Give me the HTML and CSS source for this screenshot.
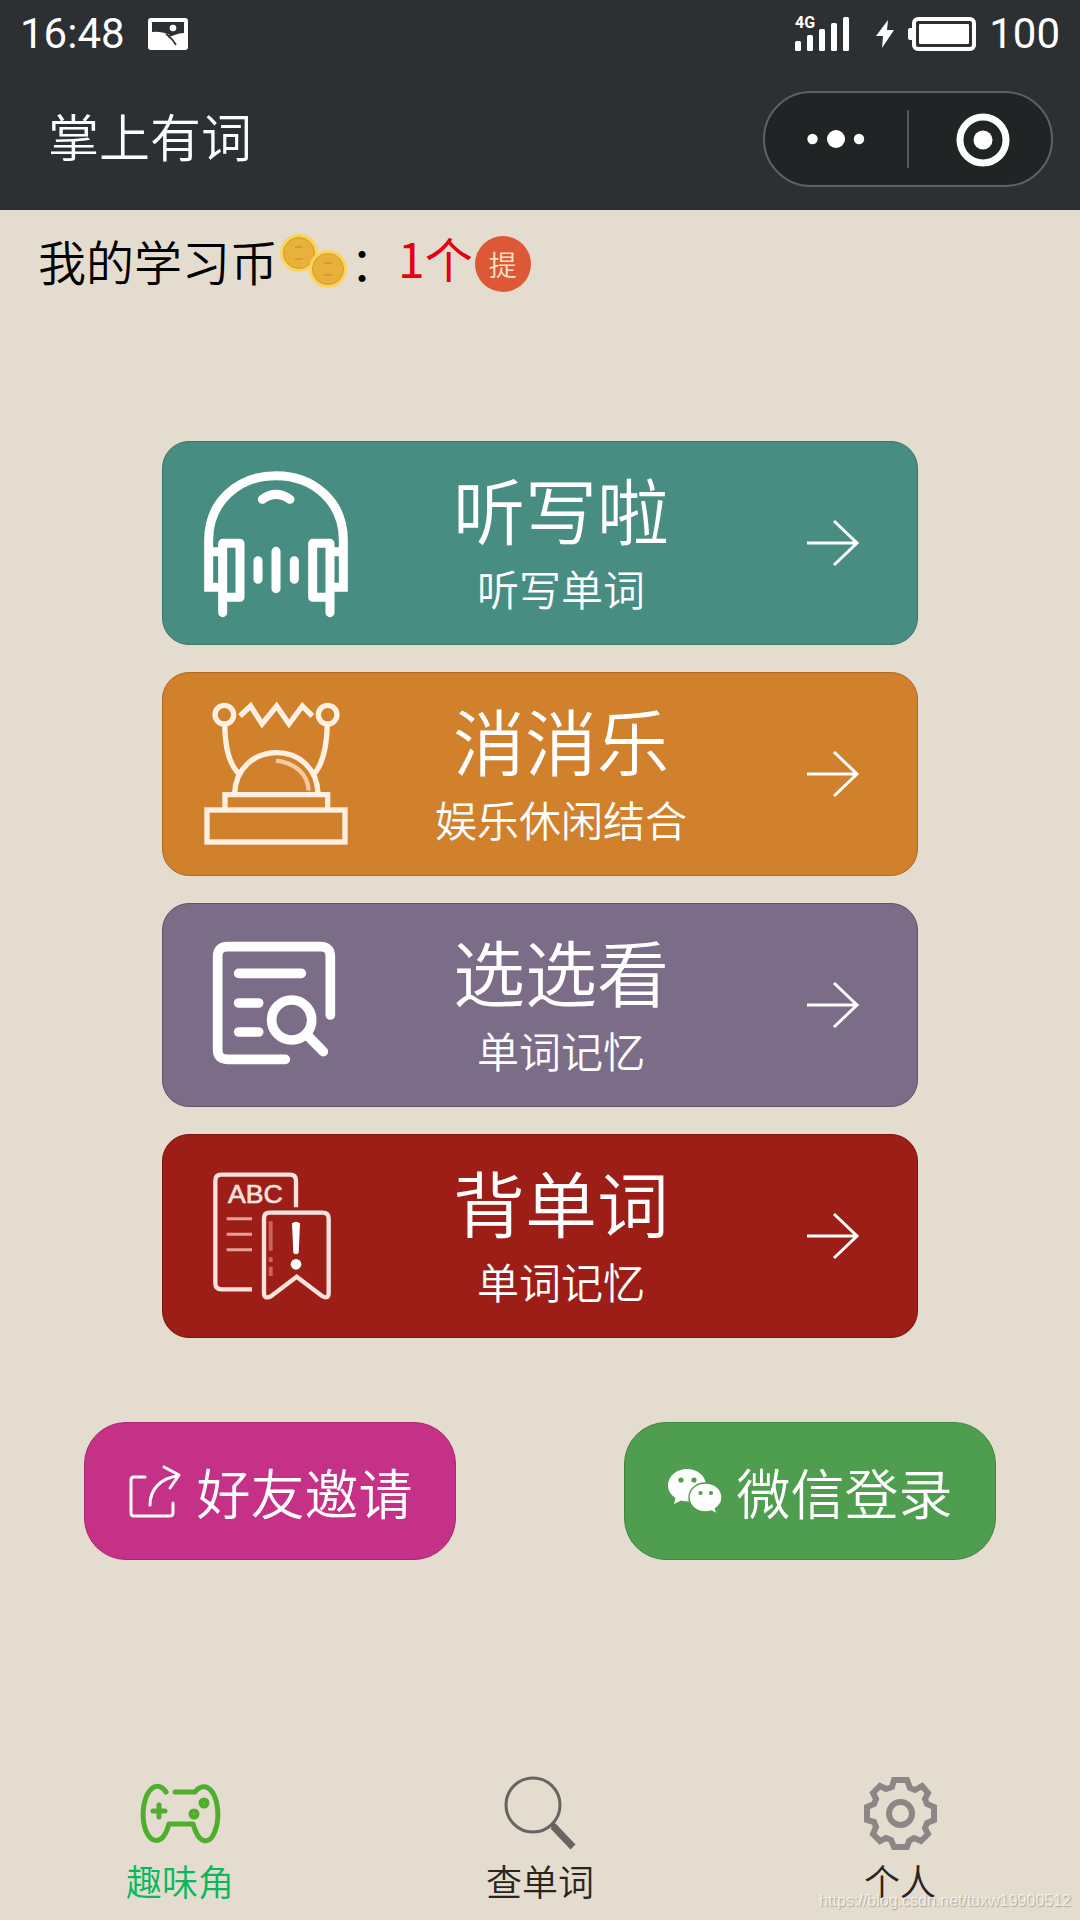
FILE: index.html
```html
<!DOCTYPE html>
<html lang="zh-CN">
<head>
    <meta charset="UTF-8">
    <meta name="viewport" content="width=device-width, initial-scale=1.0">
    <title>掌上有词</title>
    <link rel="stylesheet" href="styles.css">
</head>
<body>
    <header class="header">
        <div class="status-bar">
            <div class="status-group">
                <span>16:48</span>
                <svg class="icon-photo" viewBox="0 0 40 32">
                    <rect width="40" height="32" rx="3" fill="#fff"/>
                    <path d="M4 4H36V15Q31 15 24 18Q14 13 4 14Z" fill="#2c3032"/>
                    <path d="M18 16Q24 20 28 27M20 19L25 16" stroke="#2c3032" stroke-width="1.6" fill="none"/>
                    <circle cx="25" cy="10" r="3.3" fill="#fff"/>
                </svg>
            </div>
            <div class="status-group">
                <svg class="icon-signal" viewBox="0 0 56 36" fill="#fff">
                    <text class="net-type" x="0" y="12">4G</text>
                    <rect x="0" y="25" width="6" height="10" rx="1.5"/>
                    <rect x="12" y="19" width="6" height="16" rx="1.5"/>
                    <rect x="24" y="13" width="6" height="22" rx="1.5"/>
                    <rect x="36" y="7" width="6" height="28" rx="1.5"/>
                    <rect x="48" y="1" width="6" height="34" rx="1.5"/>
                </svg>
                <svg class="icon-bolt" viewBox="0 0 20 30" fill="#fff">
                    <path d="M13 1L1 17H8L7 29L19 11H12Z"/>
                </svg>
                <svg class="icon-battery" viewBox="0 0 70 34">
                    <rect x="1" y="11" width="6" height="12" rx="2" fill="#fff"/>
                    <rect x="7" y="2" width="60" height="30" rx="4" fill="none" stroke="#fff" stroke-width="4"/>
                    <rect x="12" y="7" width="50" height="20" rx="1" fill="#fff"/>
                </svg>
                <span>100</span>
            </div>
        </div>
        <div class="nav-bar">
            <h1 class="nav-title">掌上有词</h1>
            <div class="capsule">
                <button class="capsule-btn" type="button" aria-label="更多">
                    <svg class="icon-more" viewBox="0 0 58 18" fill="#fff">
                        <circle cx="5.500" cy="9" r="5.200"/>
                        <circle cx="29" cy="9" r="9"/>
                        <circle cx="52" cy="9" r="5.200"/>
                    </svg>
                </button>
                <button class="capsule-btn" type="button" aria-label="关闭">
                    <svg class="icon-close" viewBox="0 0 60 54">
                        <circle cx="33" cy="28" r="23" fill="none" stroke="#fff" stroke-width="7"/>
                        <circle cx="33" cy="28" r="9.500" fill="#fff"/>
                    </svg>
                </button>
            </div>
        </div>
    </header>

    <main class="content">
        <div class="coin-row">
            <span class="coin-label">我的学习币</span>
            <svg class="icon-coins" viewBox="0 0 72 56">
                <circle cx="21" cy="20" r="19" fill="#fbd45c"/>
                <circle cx="21" cy="20" r="15.500" fill="#e7b13c" stroke="#d39b2d"/>
                <path d="M17 14H25M17 26H25" stroke="#cf9628" stroke-width="1.500"/>
                <circle cx="50" cy="36" r="19" fill="#fbd45c"/>
                <circle cx="50" cy="36" r="15.500" fill="#e7b13c" stroke="#d39b2d"/>
                <path d="M46 30H54M46 42H54" stroke="#cf9628" stroke-width="1.500"/>
            </svg>
            <span class="coin-label">：</span>
            <span class="coin-count">1个</span>
            <button class="coin-badge" type="button">提</button>
        </div>

        <div class="cards">
            <button class="card card-green" type="button">
                <svg class="card-icon" viewBox="162 123 432 432" fill="none" stroke="#fff" stroke-width="27">
                    <path d="M218 472H176V330C176 220 260 137 378 137S580 220 580 330V472H540"/>
                    <path d="M188 365H212M544 365H568"/>
                    <path d="M218 548V340H270V502H226M540 548V340H488V502H532" stroke-linejoin="round" stroke-linecap="round"/>
                    <path d="M337 208Q378 178 420 208M324 392V448M378 364V476M433 392V448" stroke-linecap="round"/>
                </svg>
                <span class="card-text">
                    <span class="card-title">听写啦</span>
                    <span class="card-desc">听写单词</span>
                </span>
                <svg class="card-arrow" viewBox="0 0 118 60">
                    <path d="M33 30H83M60 8L83 30L60 52"/>
                </svg>
            </button>
            <button class="card card-orange" type="button">
                <svg class="card-icon" viewBox="162 126 432 432" fill="none" stroke="#fff0e2" stroke-width="16">
                    <circle cx="223" cy="164" r="28"/>
                    <circle cx="533" cy="164" r="28"/>
                    <path d="M270 168L302 138L336 192L380 138L417 192L457 138L487 168"/>
                    <path d="M224 194C226 270 238 310 266 342M532 194C530 270 516 315 492 342"/>
                    <path d="M254 398C258 326 312 278 380 278S500 326 504 398"/>
                    <path d="M378 302C432 308 474 340 476 392" stroke="#f6c9a0" stroke-width="13"/>
                    <path d="M225 446V404H533V446"/>
                    <rect x="171" y="450" width="414" height="96"/>
                </svg>
                <span class="card-text">
                    <span class="card-title">消消乐</span>
                    <span class="card-desc">娱乐休闲结合</span>
                </span>
                <svg class="card-arrow" viewBox="0 0 118 60">
                    <path d="M33 30H83M60 8L83 30L60 52"/>
                </svg>
            </button>
            <button class="card card-purple" type="button">
                <svg class="card-icon" viewBox="162 129 432 432" fill="none" stroke="#fff" stroke-width="29" stroke-linecap="round">
                    <path d="M406 508H232Q203 508 203 479V199Q203 170 232 170H512Q541 170 541 199V375"/>
                    <path d="M266 250H454M266 339H326M266 426H326"/>
                    <circle cx="425" cy="390" r="60"/>
                    <path d="M474 438L520 485"/>
                </svg>
                <span class="card-text">
                    <span class="card-title">选选看</span>
                    <span class="card-desc">单词记忆</span>
                </span>
                <svg class="card-arrow" viewBox="0 0 118 60">
                    <path d="M33 30H83M60 8L83 30L60 52"/>
                </svg>
            </button>
            <button class="card card-red" type="button">
                <svg class="card-icon" viewBox="162 132 432 432" fill="none" stroke="#fbe3dd" stroke-width="13">
                    <path d="M306 508H214Q196 508 196 490V182Q196 164 214 164H420Q438 164 438 182V262"/>
                    <path d="M230 296H306M230 343H306M230 389H306" stroke="#e5a29b" stroke-width="9"/>
                    <path d="M358 278H518Q536 278 536 296V518Q536 540 516 528L440 470L364 528Q342 540 342 518V296Q342 278 358 278Z"/>
                    <path d="M362 304V392M362 412V426M362 440V468" stroke="#c9655d" stroke-width="12"/>
                    <path d="M426 310Q438 300 450 310L446 398Q438 408 430 398Z" fill="#fff" stroke="none"/>
                    <circle cx="438" cy="433" r="16" fill="#fff" stroke="none"/>
                    <text class="icon-abc" x="316" y="248">ABC</text>
                </svg>
                <span class="card-text">
                    <span class="card-title">背单词</span>
                    <span class="card-desc">单词记忆</span>
                </span>
                <svg class="card-arrow" viewBox="0 0 118 60">
                    <path d="M33 30H83M60 8L83 30L60 52"/>
                </svg>
            </button>
        </div>

        <div class="actions">
            <button class="action-btn action-invite" type="button">
                <svg class="action-icon" viewBox="0 0 54 54" fill="none" stroke="#fff" stroke-width="3" stroke-linecap="round" stroke-linejoin="round">
                    <path d="M17 13H6Q3 13 3 16V49Q3 52 6 52H41Q45 52 45 49V39"/>
                    <path d="M22 41C22 26 32 14 50 12M36 3L51 11L42 24"/>
                </svg>
                <span>好友邀请</span>
            </button>
            <button class="action-btn action-login" type="button">
                <svg class="action-icon" viewBox="0 0 54 54">
                    <path d="M19 5C8.500 5 0 12 0 21.500C0 26.500 3 31 7.500 34L6 40L13 36.500Q16 37.500 21 37.500C31 37 38 30 38 21.500C38 12 29.500 5 19 5Z" fill="#fff"/>
                    <circle cx="13" cy="16" r="2.600" fill="#4f9d4e"/>
                    <circle cx="26" cy="16" r="2.600" fill="#4f9d4e"/>
                    <path d="M37.500 19C28 19 21 25.500 21 33.500S28 48 37.500 48Q41 48 43.500 47L49 50L47.500 44.500C51.500 42 54 38 54 33.500C54 25.500 47 19 37.500 19Z" fill="#fff" stroke="#4f9d4e" stroke-width="1.400"/>
                    <circle cx="32.500" cy="29" r="2.100" fill="#4f9d4e"/>
                    <circle cx="43" cy="29" r="2.100" fill="#4f9d4e"/>
                </svg>
                <span>微信登录</span>
            </button>
        </div>
    </main>

    <nav class="tab-bar">
        <a class="tab tab-active" href="#">
            <svg class="tab-icon" viewBox="0 0 81 81" fill="none" stroke="#4fae2d" stroke-width="5" stroke-linecap="round" stroke-linejoin="round">
                <path d="M26 19C20 10 12 12 7 22C2 33 2 48 6 58C11 70 20 70 25 61Q27 58 29 51H53Q55 58 58 63C63 70 71 70 75 58C79 48 79 33 74 22C69 12 61 11 55 19H35"/>
                <path d="M13 38H25M19 32V44"/>
                <circle cx="64" cy="30" r="3"/>
                <circle cx="54" cy="41" r="3"/>
            </svg>
            <span>趣味角</span>
        </a>
        <a class="tab" href="#">
            <svg class="tab-icon" viewBox="0 0 81 81" fill="none" stroke="#6a6361">
                <circle cx="33" cy="32" r="27" stroke-width="3"/>
                <path d="M52 51L57 56" stroke-width="5"/>
                <path d="M53 53L73 74" stroke-width="7"/>
            </svg>
            <span>查单词</span>
        </a>
        <a class="tab" href="#">
            <svg class="tab-icon" viewBox="0 0 81 81" fill="none" stroke="#8c8786" stroke-width="6">
                <path d="M34 7H47L50 15L55 17L62 13L68 20L65 26L67 31L74 34V47L67 50L65 55L68 61L61 68L54 65L49 68L47 74H34L31 67L26 65L20 68L13 61L16 54L14 49L7 47V34L14 31L16 26L13 20L20 13L26 16L32 14Z"/>
                <circle cx="40.500" cy="40.500" r="11.500"/>
            </svg>
            <span>个人</span>
        </a>
        <span class="watermark">https://blog.csdn.net/tuxw19900512</span>
    </nav>
</body>
</html>
```

FILE: styles.css
```css
* {
    box-sizing: border-box;
}
body {
    display: flex;
    flex-direction: column;
    min-height: 100vh;
    margin: 0;
    background: #e4ddcf;
    color: #000;
    font-family: "Noto Sans CJK SC", sans-serif;
    font-weight: 350;
}
button {
    margin: 0;
    padding: 0;
    border: none;
    background: none;
    color: inherit;
    font: inherit;
    cursor: pointer;
}
svg {
    display: block;
    flex: none;
    overflow: visible;
}

/* 顶部 */
.header {
    background: #2c3032;
    color: #fff;
    padding-bottom: 23px;
}
.status-bar {
    display: flex;
    justify-content: space-between;
    align-items: center;
    height: 67px;
    padding: 0 20px;
    font: 400 42px/67px Roboto, sans-serif;
}
.status-group {
    display: flex;
    align-items: center;
}
.icon-photo {
    width: 40px;
    height: 32px;
    margin-left: 23px;
}
.icon-signal {
    width: 56px;
    height: 36px;
}
.net-type {
    font: 700 16px Roboto, sans-serif;
}
.icon-bolt {
    width: 20px;
    height: 30px;
    margin-left: 24px;
}
.icon-battery {
    width: 70px;
    height: 34px;
    margin: 0 12px;
}
.nav-bar {
    display: flex;
    justify-content: space-between;
    align-items: center;
    height: 120px;
    padding: 24px 27px 0 48px;
}
.nav-title {
    margin: 0;
    padding-bottom: 8px;
    font-size: 51px;
    font-weight: 350;
    line-height: 88px;
}
.capsule {
    display: flex;
    align-items: center;
    width: 290px;
    height: 96px;
    border: 2px solid #5d6162;
    border-radius: 48px;
    background: #202425;
}
.capsule-btn {
    display: flex;
    flex: 1;
    justify-content: center;
    align-items: center;
    height: 58px;
}
.capsule-btn + .capsule-btn {
    border-left: 2px solid #56595a;
}
.icon-more {
    width: 58px;
    height: 18px;
}
.icon-close {
    width: 60px;
    height: 54px;
}

/* 学习币 */
.content {
    flex: 1;
}
.coin-row {
    display: flex;
    align-items: center;
    padding: 15px 38px 0;
    font-size: 48px;
    line-height: 64px;
}
.coin-label {
    padding-bottom: 8px;
}
.icon-coins {
    width: 72px;
    height: 56px;
    margin-bottom: 6px;
}
.coin-count {
    padding: 0 2px 14px 0;
    color: #e60012;
    font-weight: 400;
}
.coin-badge {
    width: 56px;
    height: 56px;
    border-radius: 50%;
    background: #dc5836;
    color: #fbe3c8;
    font-size: 28px;
    line-height: 52px;
}

/* 功能卡片 */
.cards {
    display: flex;
    flex-direction: column;
    gap: 27px;
    width: 70%;
    margin: 138px auto 0;
}
.card {
    display: flex;
    align-items: center;
    height: 204px;
    padding: 0 25px 0 41px;
    border: 1px solid;
    border-radius: 27px;
    color: #fff;
}
.card-green {
    background: #488d82;
    border-color: #39776b;
}
.card-orange {
    background: #d1802c;
    border-color: #b0691f;
}
.card-purple {
    background: #7b6c87;
    border-color: #625269;
}
.card-red {
    background: #9c1e17;
    border-color: #7d1510;
}
.card-icon {
    width: 144px;
    height: 144px;
}
.icon-abc {
    fill: #fbe3dd;
    stroke: #fbe3dd;
    stroke-width: 2px;
    font: 400 80px "Liberation Sans", sans-serif;
    text-anchor: middle;
}
.card-text {
    display: flex;
    flex: 1;
    flex-direction: column;
    align-items: center;
    padding-bottom: 6px;
}
.card-title {
    font-size: 72px;
    line-height: 96px;
}
.card-desc {
    font-size: 42px;
    line-height: 64px;
}
.card-arrow {
    width: 118px;
    height: 60px;
    fill: none;
    stroke: #fff;
    stroke-width: 3;
}

/* 底部按钮 */
.actions {
    display: flex;
    justify-content: space-around;
    margin-top: 84px;
}
.action-btn {
    display: flex;
    justify-content: center;
    align-items: center;
    gap: 15px;
    width: 372px;
    height: 138px;
    border: 1px solid;
    border-radius: 42px;
    color: #fff;
    font-size: 54px;
}
.action-invite {
    background: #c63188;
    border-color: #a32a70;
}
.action-login {
    background: #4f9d4e;
    border-color: #428541;
}
.action-icon {
    width: 54px;
    height: 54px;
}

/* 导航 */
.tab-bar {
    display: flex;
    position: relative;
    padding: 15px 0 14px;
}
.tab {
    display: flex;
    flex: 1;
    flex-direction: column;
    align-items: center;
    color: #2b2520;
    font-size: 36px;
    line-height: 52px;
    text-decoration: none;
}
.tab-active {
    color: #07b85c;
}
.tab-icon {
    width: 81px;
    height: 81px;
}
.watermark {
    position: absolute;
    right: 9px;
    bottom: 9px;
    color: rgba(255, 255, 255, 0.7);
    font: 16px/20px "Liberation Sans", sans-serif;
    text-shadow: 1px 1px 1px rgba(120, 110, 100, 0.5);
}
```
